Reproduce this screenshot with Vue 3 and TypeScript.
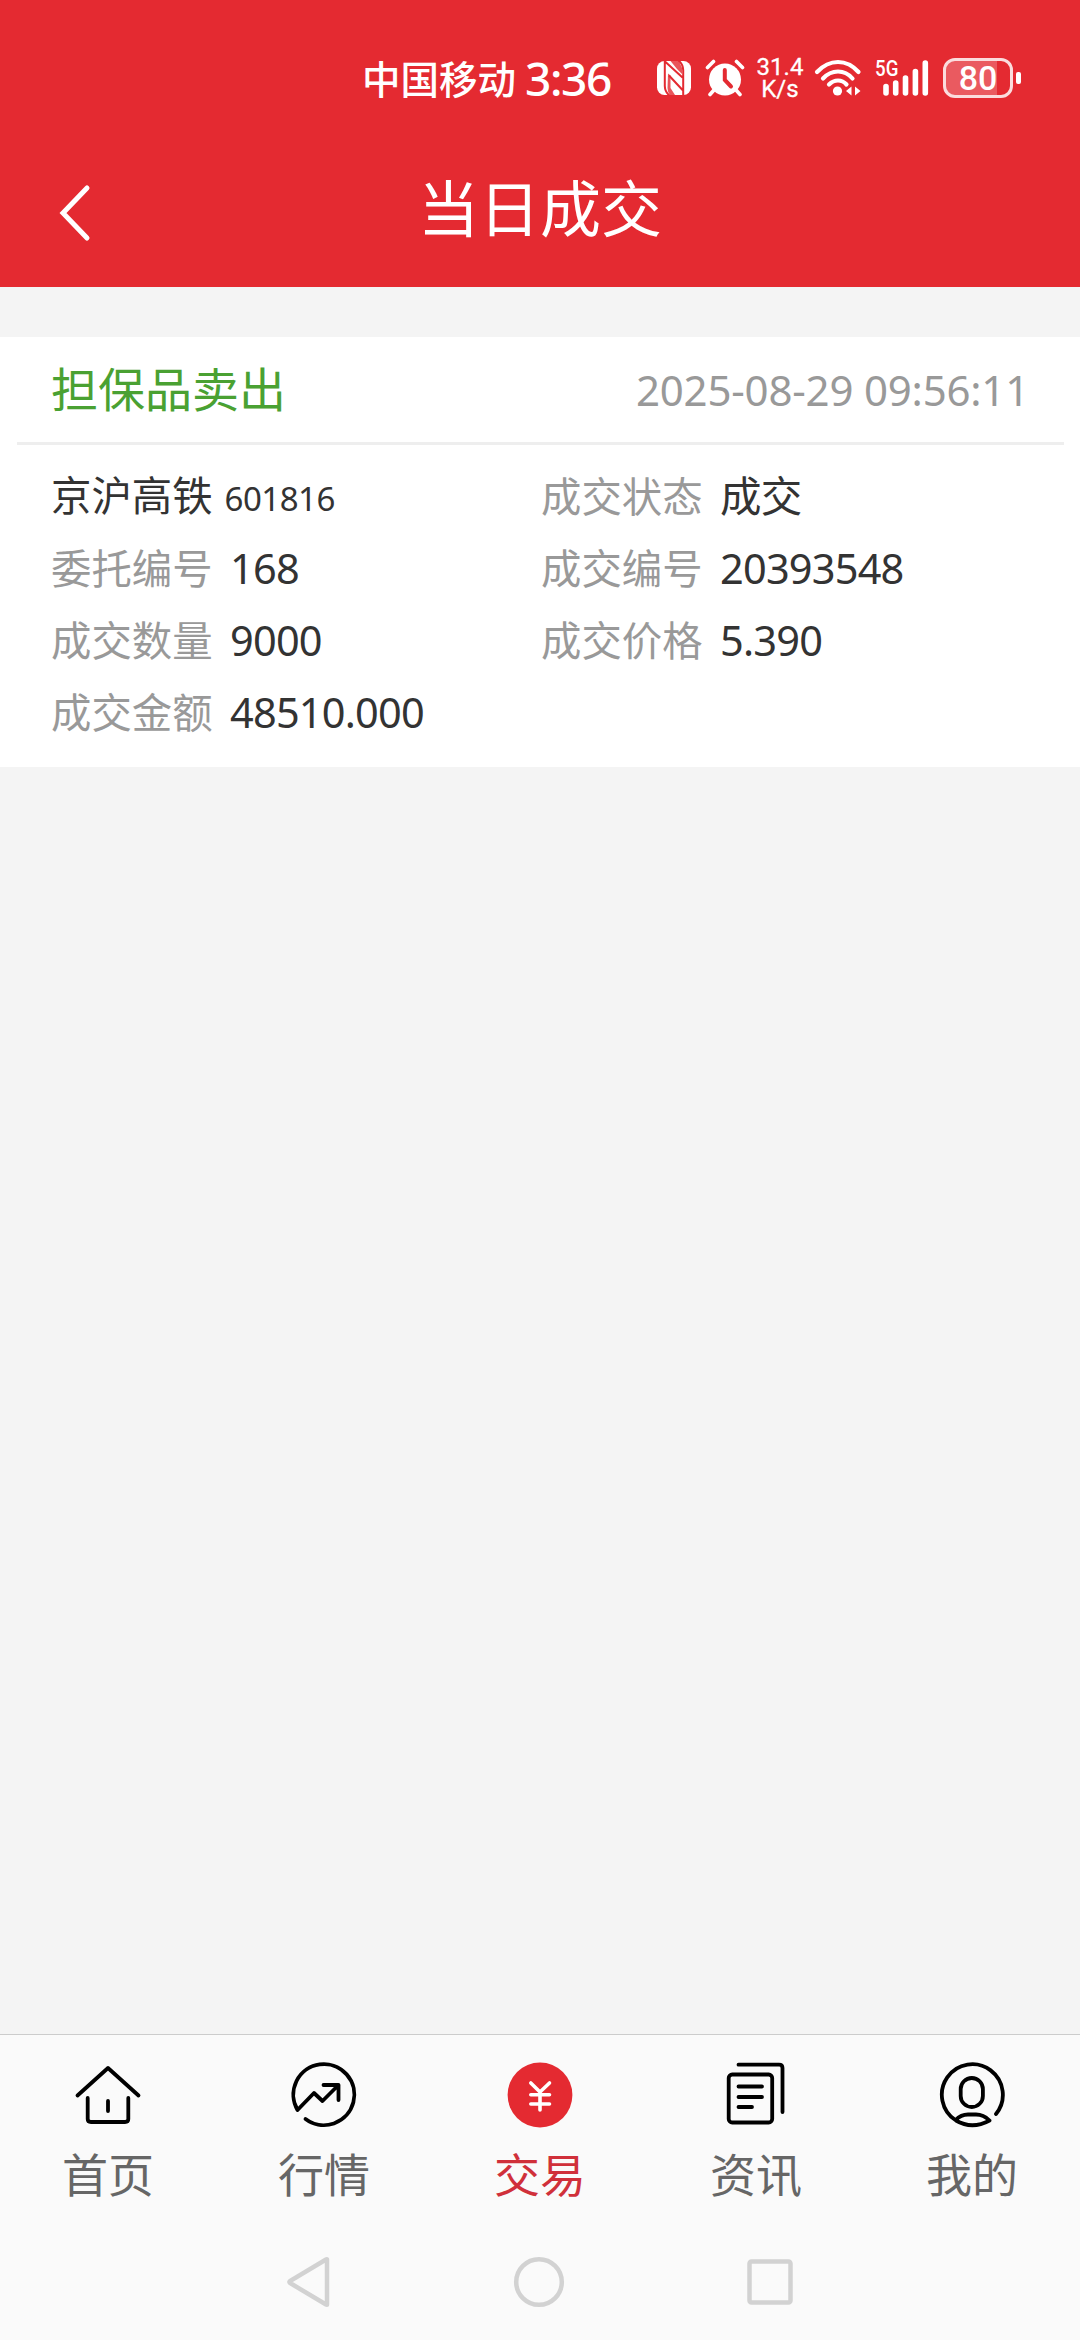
<script setup lang="ts">
interface Field {
  label: string
  value: string
}

const fields: Field[] = [
  { label: '成交状态', value: '成交' },
  { label: '委托编号', value: '168' },
  { label: '成交编号', value: '20393548' },
  { label: '成交数量', value: '9000' },
  { label: '成交价格', value: '5.390' },
  { label: '成交金额', value: '48510.000' },
]

const tabs = [
  { id: 'home', label: '首页' },
  { id: 'market', label: '行情' },
  { id: 'trade', label: '交易' },
  { id: 'news', label: '资讯' },
  { id: 'mine', label: '我的' },
]
const activeTab = 'trade'
</script>

<template>
  <div class="screen">
    <header class="top">
      <div class="status">
        <span class="carrier">中国移动</span>
        <span class="clock">3:36</span>
        <svg class="nfc" width="34" height="34" viewBox="0 0 34 34">
          <rect width="34" height="34" rx="7.500" fill="#fff" />
          <path fill="none" stroke="#e42a31" stroke-width="2" d="M7.800 0V25Q8 31 12.500 34.500M26.200 34V9Q26 3 21.500 -0.500M8 0.500L25.500 16.500M12 14.500L26 29.500" />
          <path fill="#e42a31" d="M11 12.500L13.500 14.500V27L18 34H13Q10.500 31 10.500 27ZM13.500 0H22L25 7V13L20 8Z" fill-opacity=".8" />
        </svg>
        <svg class="alarm" width="40" height="38" viewBox="0 0 40 38">
          <circle cx="20" cy="20.500" r="16" fill="#fff" />
          <path d="M2.500 8.500L8.500 2.500M37.500 8.500L31.500 2.500M9 31L5 35.500M31 31L35 35.500" stroke="#fff" stroke-width="3.600" stroke-linecap="round" />
          <path d="M19.800 11V21L26 27.500" fill="none" stroke="#e42a31" stroke-width="4" stroke-linecap="round" />
        </svg>
        <div class="speed"><span>31.4</span><span>K/s</span></div>
        <svg class="wifi" width="48" height="38" viewBox="0 0 48 38">
          <g fill="none" stroke="#fff" stroke-width="4.200" stroke-linecap="round">
            <path d="M3 13Q12.500 3 24 3T44.500 13" />
            <path d="M9 19.500Q15.500 12.500 24 12.500T38.500 19.500" />
            <path d="M15 25.500Q19 21.500 24 21.500T32.500 25.500" />
          </g>
          <circle cx="23.500" cy="32" r="4.600" fill="#fff" />
          <path d="M37.500 27.500V36.500L32 32ZM41 27.500V36.500L46.500 32Z" fill="#fff" />
        </svg>
        <div class="cell">
          <span class="gen">5G</span>
          <svg width="46" height="38" viewBox="0 0 46 38">
            <path d="M3 27.500V34M12.700 24V34M22.500 19V34M32.400 12.500V34M42.300 4V34" stroke="#fff" stroke-width="5.600" stroke-linecap="round" />
          </svg>
        </div>
        <div class="battery"><span>80</span></div>
        <i class="nub"></i>
      </div>
      <div class="titlebar">
        <svg class="back" width="34" height="58" viewBox="0 0 34 58">
          <path d="M29 4L5 29L29 54" fill="none" stroke="#fff" stroke-width="5" stroke-linecap="round" />
        </svg>
        <h1>当日成交</h1>
      </div>
    </header>

    <main>
      <section class="card">
        <div class="cardhead">
          <span class="side">担保品卖出</span>
          <time>2025-08-29 09:56:11</time>
        </div>
        <div class="grid">
          <div class="field"><span class="name">京沪高铁</span><span class="code">601816</span></div>
          <div v-for="f in fields" :key="f.label" class="field">
            <span class="label">{{ f.label }}</span><span class="value">{{ f.value }}</span>
          </div>
        </div>
      </section>
    </main>

    <nav class="tabs">
      <div v-for="t in tabs" :key="t.id" class="tab" :class="{ active: t.id === activeTab }">
        <svg width="70" height="70" viewBox="0 0 70 70" fill="none" stroke="#000" stroke-width="3.800" stroke-linecap="round" stroke-linejoin="round">
          <template v-if="t.id === 'home'">
            <path d="M4.500 35.500L35 8L65.500 35.500M14.700 38V59Q14.700 62 18 62H52Q55.300 62 55.300 59V38M35 41V51" />
          </template>
          <template v-else-if="t.id === 'market'">
            <path d="M16.500 59A30.500 30.500 0 1 0 8.500 50L25 33L33.500 41L49.500 25M34.500 25H49.500V40" />
          </template>
          <template v-else-if="t.id === 'trade'">
            <circle cx="35" cy="35" r="32.400" fill="#e42a31" stroke="none" />
            <path stroke="#fff" stroke-width="3.600" d="M25.800 23L35 32L44.500 23M35 32V50M25.800 34.800H44.500M25.800 44H44.500" />
          </template>
          <template v-else-if="t.id === 'news'">
            <rect x="7.700" y="14.500" width="43.500" height="48" rx="3.500" />
            <path d="M17.500 4.700H58Q61.500 4.700 61.500 8V52M17.500 26.500H41M17.500 37H41M17.500 47H31" />
          </template>
          <template v-else>
            <path d="M59 54A30.500 30.500 0 1 0 19 60.500Q35 70 52.500 60.500Q46.500 54.500 39 54.500H31Q24 54.500 18.500 60" />
            <rect x="23.700" y="18" width="22.200" height="29" rx="11.100" />
          </template>
        </svg>
        <span>{{ t.label }}</span>
      </div>
    </nav>

    <footer class="sysnav">
      <svg width="44" height="52" viewBox="0 0 44 52"><path d="M40 3.500V48.500Q40 49 39 48.500L3 27Q2 26 3 25L39 3.500Q40 3 40 3.500Z" /></svg>
      <svg width="52" height="52" viewBox="0 0 52 52"><circle cx="26" cy="26" r="22.800" /></svg>
      <svg width="46" height="46" viewBox="0 0 46 46"><rect x="2.500" y="2.500" width="41" height="41" rx="2" /></svg>
    </footer>
  </div>
</template>

<style>
body {
  margin: 0;
  background: #f4f4f4;
}
</style>

<style scoped>
.screen {
  width: 1080px;
  height: 2340px;
  display: flex;
  flex-direction: column;
  overflow: hidden;
  background: #f4f4f4;
  font-family: "Noto Sans", "Noto Sans CJK SC", sans-serif;
}
.top {
  height: 287px;
  background: #e42a31;
  color: #fff;
}
.status {
  height: 76px;
  padding: 40px 0 0 362px;
  display: flex;
  align-items: center;
  white-space: nowrap;
}
.status svg {
  display: block;
  flex: none;
}
.carrier {
  width: 163px;
  margin-top: -3px;
  font: 500 38.500px/76px "Noto Sans CJK SC", sans-serif;
}
.clock {
  width: 132px;
  font-size: 46px;
  font-weight: 500;
  line-height: 76px;
  letter-spacing: -1.400px;
}
.alarm {
  margin-left: 14px;
}
.speed {
  width: 58px;
  margin-left: 6px;
  display: flex;
  flex-direction: column;
  align-items: center;
  font: 400 24px/22px Roboto, sans-serif;
  -webkit-text-stroke: .3px #fff;
}
.wifi {
  margin-left: 5px;
}
.cell {
  position: relative;
  margin-left: 21px;
}
.gen {
  position: absolute;
  left: -8px;
  top: -1px;
  font: 500 22px/22px Roboto, sans-serif;
  transform: scaleX(.85);
  transform-origin: left;
}
.battery {
  box-sizing: border-box;
  width: 70px;
  height: 40px;
  margin-left: 14px;
  border: 3px solid #fbdcdd;
  border-radius: 12px;
  background: linear-gradient(90deg, #ea5a60 51px, transparent 51px);
  font: 500 34px/35px Roboto, sans-serif;
  text-align: center;
}
.nub {
  width: 5px;
  height: 12px;
  margin-left: 3px;
  border-radius: 2px;
  background: #fff;
}
.titlebar {
  height: 171px;
  padding: 0 58px;
  display: grid;
  grid-template-columns: 34px 1fr 34px;
  align-items: center;
}
.back {
  margin-top: 23px;
}
h1 {
  margin: 9px 0 0;
  text-align: center;
  font: 400 61px/80px "Noto Sans CJK SC", sans-serif;
}
main {
  flex: 1;
  padding-top: 50px;
}
.card {
  height: 430px;
  background: #fff;
}
.cardhead {
  height: 105px;
  margin: 0 16px 0 17px;
  padding: 0 35px 0 34px;
  border-bottom: 3px solid #eee;
  display: flex;
  justify-content: space-between;
  align-items: center;
}
.side {
  margin-top: -6px;
  font-size: 47px;
  color: #4aa132;
}
time {
  font-size: 42px;
  letter-spacing: -.2px;
  color: #999;
}
.grid {
  padding: 15px 0 0 51px;
  display: grid;
  grid-template-columns: 490px 1fr;
  grid-auto-rows: 72px;
}
.field {
  display: flex;
  align-items: baseline;
  font-size: 40.400px;
  line-height: 72px;
  color: #333;
}
.label {
  width: 179px;
  color: #999;
}
.value {
  font-size: 41.500px;
  letter-spacing: -.8px;
}
.code {
  margin-left: 12px;
  font-size: 33px;
  letter-spacing: -.5px;
}
.tabs {
  height: 184px;
  border-top: 1px solid #ccc;
  background: #fafafa;
  display: flex;
}
.tab {
  flex: 1;
  padding-top: 25px;
  display: flex;
  flex-direction: column;
  align-items: center;
  font-size: 46px;
  line-height: 60px;
  color: #666;
}
.tab svg {
  margin-bottom: 14px;
}
.tab.active {
  color: #d0303a;
}
.sysnav {
  height: 121px;
  padding: 0 287px;
  background: #fafafa;
  display: flex;
  justify-content: space-between;
  align-items: center;
}
.sysnav svg {
  fill: none;
  stroke: #d2d2d2;
  stroke-width: 4.500;
  margin-top: 5px;
}
</style>
